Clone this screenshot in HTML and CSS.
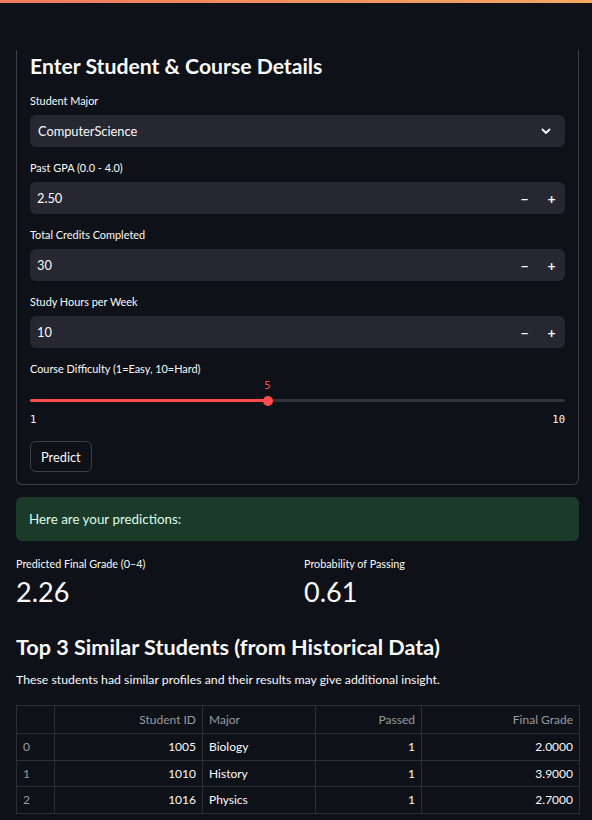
FILE: index.html
```html
<!DOCTYPE html>
<html>
<head>
<meta charset="utf-8">
<link rel="stylesheet" href="styles.css">
</head>
<body>
<div class="decoration"></div>
<main class="main">
  <section class="form">
    <h3 class="form-title">Enter Student &amp; Course Details</h3>
    <div class="field">
      <label class="label">Student Major</label>
      <div class="select">
        <span>ComputerScience</span>
        <svg class="chev" width="10" height="7" viewBox="0 0 10 7"><path d="M1.5 1.5 L5 5 L8.5 1.5" fill="none" stroke="#fafafa" stroke-width="1.8" stroke-linecap="round" stroke-linejoin="round"/></svg>
      </div>
    </div>
    <div class="field">
      <label class="label">Past GPA (0.0 - 4.0)</label>
      <div class="number"><span class="val">2.50</span><span class="step">−</span><span class="step">+</span></div>
    </div>
    <div class="field">
      <label class="label">Total Credits Completed</label>
      <div class="number"><span class="val">30</span><span class="step">−</span><span class="step">+</span></div>
    </div>
    <div class="field">
      <label class="label">Study Hours per Week</label>
      <div class="number"><span class="val">10</span><span class="step">−</span><span class="step">+</span></div>
    </div>
    <div class="field slider-field">
      <label class="label">Course Difficulty (1=Easy, 10=Hard)</label>
      <div class="slider">
        <div class="slider-value-row"><span class="slider-value" style="left: 44.4%">5</span></div>
        <div class="track"><div class="fill" style="width: 44.4%"></div><div class="thumb" style="left: 44.4%"></div></div>
        <div class="ticks"><span>1</span><span>10</span></div>
      </div>
    </div>
    <button class="btn">Predict</button>
  </section>

  <div class="success">Here are your predictions:</div>

  <div class="metrics">
    <div class="metric">
      <div class="metric-label">Predicted Final Grade (0–4)</div>
      <div class="metric-value">2.26</div>
    </div>
    <div class="metric">
      <div class="metric-label">Probability of Passing</div>
      <div class="metric-value">0.61</div>
    </div>
  </div>

  <h3 class="section-title">Top 3 Similar Students (from Historical Data)</h3>
  <p class="para">These students had similar profiles and their results may give additional insight.</p>

  <table class="table">
    <colgroup><col class="c0"><col class="c1"><col class="c2"><col class="c3"><col class="c4"></colgroup>
    <thead>
      <tr><th></th><th class="num">Student ID</th><th>Major</th><th class="num">Passed</th><th class="num">Final Grade</th></tr>
    </thead>
    <tbody>
      <tr><td class="idx">0</td><td class="num">1005</td><td>Biology</td><td class="num">1</td><td class="num">2.0000</td></tr>
      <tr><td class="idx">1</td><td class="num">1010</td><td>History</td><td class="num">1</td><td class="num">3.9000</td></tr>
      <tr><td class="idx">2</td><td class="num">1016</td><td>Physics</td><td class="num">1</td><td class="num">2.7000</td></tr>
    </tbody>
  </table>
</main>
</body>
</html>
```

FILE: styles.css
```css
* { box-sizing: border-box; }
html, body {
  margin: 0;
  padding: 0;
  background: #0e1117;
  color: #fafafa;
  font-family: Lato, "Noto Sans", sans-serif;
  font-size: 12.8px;
}
.decoration {
  height: 3px;
  background: linear-gradient(90deg, #ee7b5b, #f4a862);
}
.main {
  padding: 47px 13px 0 16px;
  display: flex;
  flex-direction: column;
}
.form {
  border: 1px solid #3c3f45;
  border-top: none;
  border-radius: 0 0 6px 6px;
  padding: 2px 13px 12px 13px;
  display: flex;
  flex-direction: column;
  align-items: stretch;
}
.form-title {
  margin: 0;
  font-size: 21.2px;
  font-weight: 700;
  line-height: 28px;
  height: 28px;
}
.field {
  margin-top: 12px;
  display: flex;
  flex-direction: column;
}
.label {
  font-size: 10.9px;
  line-height: 18px;
  height: 18px;
  margin-bottom: 5px;
}
.select, .number {
  height: 32px;
  background: #262730;
  border-radius: 6px;
  display: flex;
  align-items: center;
  font-size: 12.8px;
}
.select {
  padding: 0 14px 0 8px;
  justify-content: space-between;
}
.number { padding-left: 7px; }
.number .val { flex: 1; }
.step {
  width: 27px;
  text-align: center;
  font-size: 14px;
  font-weight: 700;
}
.slider-field .label { margin-bottom: 0; }
.slider {
  display: flex;
  flex-direction: column;
}
.slider-value-row {
  position: relative;
  height: 14px;
}
.slider-value {
  position: absolute;
  top: 0;
  transform: translateX(-50%);
  color: #ff4b4b;
  font-family: "DejaVu Sans Mono", monospace;
  font-size: 10.5px;
  line-height: 14px;
}
.track {
  position: relative;
  height: 3px;
  margin: 7px 0 10px;
  background: #31333b;
  border-radius: 2px;
}
.fill {
  height: 100%;
  background: #ff4b4b;
  border-radius: 2px;
}
.thumb {
  position: absolute;
  top: 50%;
  width: 10px;
  height: 10px;
  border-radius: 50%;
  background: #ff4b4b;
  transform: translate(-50%, -50%);
}
.ticks {
  display: flex;
  justify-content: space-between;
  font-family: "DejaVu Sans Mono", monospace;
  font-size: 10.5px;
  line-height: 14px;
  height: 14px;
  color: #fafafa;
}
.btn {
  align-self: flex-start;
  margin-top: 15px;
  height: 31px;
  padding: 0 10px;
  background: #0e1117;
  color: #fafafa;
  border: 1px solid #3c3f45;
  border-radius: 6px;
  font-family: Lato, "Noto Sans", sans-serif;
  font-size: 12.8px;
}
.success {
  margin-top: 12px;
  height: 44px;
  padding: 0 13px;
  display: flex;
  align-items: center;
  background: #1b3a29;
  color: #dffde9;
  border-radius: 6px;
  font-size: 13.4px;
}
.metrics {
  margin-top: 14px;
  display: grid;
  grid-template-columns: 1fr 1fr;
  gap: 13px;
}
.metric-label {
  font-size: 10.8px;
  line-height: 18px;
}
.metric-value {
  font-size: 27px;
  line-height: 36px;
  margin-top: 1px;
}
.section-title {
  margin: 23px 0 0;
  font-size: 21.6px;
  font-weight: 700;
  line-height: 28px;
}
.para {
  margin: 9px 0 0;
  font-size: 12.3px;
  line-height: 20px;
}
.table {
  margin-top: 15px;
  width: 563px;
  border-collapse: collapse;
  table-layout: fixed;
  font-size: 12px;
}
.c0 { width: 38px; }
.c1 { width: 148px; }
.c2 { width: 113px; }
.c3 { width: 106px; }
.c4 { width: 158px; }
.table th, .table td {
  border: 1px solid #2b2e34;
  padding: 0 6px;
  text-align: left;
  white-space: nowrap;
}
.table th {
  height: 28px;
  font-weight: 400;
  color: #9a9b9e;
}
.table td { height: 26.5px; }
.table .num { text-align: right; }
.table .idx { color: #9a9b9e; }
```
